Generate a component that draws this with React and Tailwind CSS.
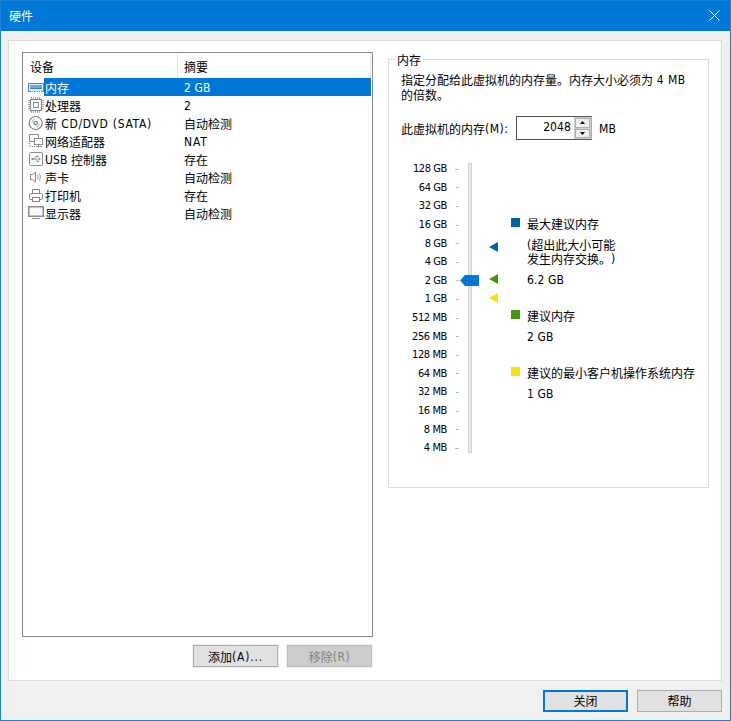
const MemoryIcon = () => (
  <svg width="16" height="16" viewBox="0 0 16 16" shapeRendering="crispEdges">
    <rect x="0" y="4" width="16" height="9" fill="#4d8cc0" />
    <rect x="1" y="5" width="14" height="7" fill="#d5ebfa" />
    <path d="M2 6h4v3H2zM6 6h4v3H6zM10 6h4v3h-4z" fill="#6aa9da" />
    <path d="M2 9h12v1H2z" fill="#3e86c4" />
    <path d="M3 12h1v1H3zM5 12h1v1H5zM8 12h1v1H8zM10 12h1v1h-1zM12 12h1v1h-1z" fill="#fff" />
  </svg>
);

const CpuIcon = () => (
  <svg width="16" height="16" viewBox="0 0 16 16" fill="none" stroke="#8c8c8c">
    <rect x="2.500" y="2.500" width="11" height="11" strokeWidth="1.200" />
    <rect x="5.500" y="5.500" width="5" height="5" />
    <path d="M3.500 0v2M5.500 0v2M7.500 0v2M9.500 0v2M11.500 0v2M3.500 14v2M5.500 14v2M7.500 14v2M9.500 14v2M11.500 14v2M0 3.500h2M0 5.500h2M0 7.500h2M0 9.500h2M0 11.500h2M14 3.500h2M14 5.500h2M14 7.500h2M14 9.500h2M14 11.500h2" stroke="#a5a5a5" />
  </svg>
);

const DiscIcon = () => (
  <svg width="16" height="16" viewBox="0 0 16 16" fill="none" stroke="#858585">
    <circle cx="7.700" cy="8" r="6.500" strokeWidth="1.200" />
    <circle cx="7.700" cy="8" r="1.700" strokeWidth="1.300" />
    <path d="M4 7.200a3.800 3.800 0 0 1 3-3M11.500 8.800a3.800 3.800 0 0 1-3 3" stroke="#b0b0b0" />
  </svg>
);

const NetworkIcon = () => (
  <svg width="16" height="16" viewBox="0 0 16 16" fill="none" stroke="#8c8c8c">
    <path d="M6 8.500H1.500v-7h9V5" />
    <path d="M1.500 10v4M2 13.500h5" strokeDasharray="1 1" />
    <rect x="6.500" y="5.500" width="8" height="6" fill="#fff" />
    <path d="M10.500 12v2M8 13.500h6" />
  </svg>
);

const UsbIcon = () => (
  <svg width="16" height="16" viewBox="0 0 16 16" fill="none" stroke="#8c8c8c">
    <rect x="1.500" y="1.500" width="13" height="13" rx="1" />
    <path d="M4 8h8M6 8l1.500-2.500H9M7.500 8l1.500 2.500h1" strokeWidth=".8" />
    <circle cx="4.500" cy="8" r="1.200" fill="#8c8c8c" stroke="none" />
    <path d="M9 4.700h1.600v1.600H9zM9.500 9.700h1.600v1.600H9.500zM11 6.500L13 8l-2 1.500z" fill="#8c8c8c" stroke="none" />
  </svg>
);

const SoundIcon = () => (
  <svg width="16" height="16" viewBox="0 0 16 16" fill="none" stroke="#858585">
    <path d="M2.500 5.500h2l3-2.500v10l-3-2.500h-2z" />
    <path d="M9.500 6q1.300 2 0 4M11.500 4.500q2 3.500 0 7" stroke="#9a9a9a" />
  </svg>
);

const PrinterIcon = () => (
  <svg width="16" height="16" viewBox="0 0 16 16" fill="none" stroke="#858585">
    <path d="M4.500 6V2.500h7V6" />
    <path d="M4 12.500H2.500a1 1 0 0 1-1-1V7.500a1 1 0 0 1 1-1h11a1 1 0 0 1 1 1v4a1 1 0 0 1-1 1H12" />
    <rect x="4.500" y="10.500" width="7" height="4" fill="#fff" />
  </svg>
);

const DisplayIcon = () => (
  <svg width="16" height="16" viewBox="0 0 16 16" fill="none" stroke="#8c8c8c">
    <rect x="0.750" y="1.750" width="14.500" height="9.500" fill="#fafafa" strokeWidth="1.500" />
    <path d="M4 13.500h8" />
  </svg>
);

const devices = [
  { icon: MemoryIcon, name: "内存", summary: "2 GB", selected: true },
  { icon: CpuIcon, name: "处理器", summary: "2" },
  { icon: DiscIcon, name: "新 CD/DVD (SATA)", summary: "自动检测", wide: true },
  { icon: NetworkIcon, name: "网络适配器", summary: "NAT", wide: true },
  { icon: UsbIcon, name: "USB 控制器", summary: "存在" },
  { icon: SoundIcon, name: "声卡", summary: "自动检测" },
  { icon: PrinterIcon, name: "打印机", summary: "存在" },
  { icon: DisplayIcon, name: "显示器", summary: "自动检测" },
];

const sizes = [
  "128 GB", "64 GB", "32 GB", "16 GB", "8 GB", "4 GB", "2 GB", "1 GB",
  "512 MB", "256 MB", "128 MB", "64 MB", "32 MB", "16 MB", "8 MB", "4 MB",
];

// CJK glyphs keep their 12px advance, latin runs get their own face
const Label = ({ text, tracking = "tracking-[0.1px]" }) =>
  text.split(/([\x20-\x7e]+)/).map((part, i) =>
    i % 2 ? (
      <span key={i} className={`align-[1px] font-['DejaVu_Sans_Condensed','DejaVu_Sans',sans-serif] leading-none [font-stretch:condensed] whitespace-pre ${tracking}`}>
        {part}
      </span>
    ) : (
      part
    )
  );

const Arrow = ({ color }) => (
  <svg width="9" height="10" viewBox="0 0 9 10">
    <path d="M0 5L9 0v10z" fill={color} />
  </svg>
);

const DeviceList = () => (
  <div className="h-[585px] w-[351px] border border-[#828790] bg-white">
    <div className="flex h-[25px] pt-px leading-[25px]">
      <div className="w-[155px] border-r border-[#e5e5e5] pl-[7px]">设备</div>
      <div className="w-[193px] border-r border-[#e5e5e5] pl-[6px]">摘要</div>
    </div>
    {devices.map(({ icon: Icon, name, summary, selected, wide }) => (
      <div key={name} className="flex h-[18px] pl-[5px] leading-[19px]">
        <div className="mt-px"><Icon /></div>
        <div className={`flex w-[327px] whitespace-nowrap pl-px ${selected ? "bg-[#0078d7] text-white" : ""}`}>
          <div className="w-[139px]"><Label text={name} tracking={wide ? "tracking-[0.7px]" : undefined} /></div>
          <div><Label text={summary} tracking={wide ? "tracking-[0.9px]" : undefined} /></div>
        </div>
      </div>
    ))}
  </div>
);

const Button = ({ className, children }) => (
  <button className={`h-[22px] w-[85px] ${className}`}>{children}</button>
);

const Spinner = () => (
  <div className="flex h-6 w-[76px] justify-end border border-[#555] border-r-[#ababab] bg-white">
    <div className="pr-[3px] leading-[20px]"><Label text="2048" /></div>
    <div className="flex w-[17px] flex-col gap-px bg-[#d0d0d0] p-px">
      <div className="flex flex-1 items-center justify-center border border-[#adadad] bg-[#f0f0f0]">
        <svg width="5" height="3"><path d="M0 3L2.500 0 5 3z" /></svg>
      </div>
      <div className="flex flex-1 items-center justify-center border border-[#adadad] bg-[#f0f0f0]">
        <svg width="5" height="3"><path d="M0 0L2.500 3 5 0z" /></svg>
      </div>
    </div>
  </div>
);

const MemoryScale = () => (
  <div className="flex text-[11px]">
    <div className="w-[71px]">
      {sizes.map((size, i) => (
        <div key={size} className="flex h-[18.6px] items-center justify-end">
          <span className="mr-2 font-['DejaVu_Sans_Condensed','DejaVu_Sans',sans-serif] [font-stretch:condensed] tracking-[-0.4px] leading-[18px]">{size}</span>
          <span className={`h-px bg-[#bdbdbd] ${i === 0 || i === 15 ? "w-1" : "ml-px w-[3px]"}`} />
        </div>
      ))}
    </div>
    <div className="relative mt-[3px] ml-[9px] h-[290px] w-1 border border-[#d1d3d3] bg-[#e7eaea]">
      <svg className="absolute top-[111px] left-[-9px]" width="19" height="11" viewBox="0 0 19 11">
        <path d="M0 5.500L5 0h14v11H5z" fill="#0078d7" />
      </svg>
    </div>
    <div className="ml-[17px] flex flex-col pt-[82px]">
      <Arrow color="#0064a8" />
      <div className="mt-[22px]"><Arrow color="#449810" /></div>
      <div className="mt-[9px]"><Arrow color="#ffdc0c" /></div>
    </div>
  </div>
);

const LegendItem = ({ swatch, title, value, children }) => (
  <div className="flex gap-[7px] whitespace-nowrap">
    <div className={`mt-[2px] size-[9px] shrink-0 ${swatch}`} />
    <div>
      <div className="leading-[16px]">{title}</div>
      {children}
      <div className="mt-[5px] leading-[16px]"><Label text={value} /></div>
    </div>
  </div>
);

const MemoryPanel = () => (
  <fieldset className="ml-[15px] h-[436px] w-[321px] border border-[#dcdcdc]">
    <legend className="ml-[6px] h-[14px] px-[2px] leading-[16px]">内存</legend>
    <div className="pt-[7px] pl-3">
      <div className="w-[290px] leading-[14px]">
        <div className="h-[15px]">
          <Label text="指定分配给此虚拟机的内存量。内存大小必须为 4 MB" tracking="tracking-[0.4px]" />
        </div>
        的倍数。
      </div>
      <div className="mt-[14px] flex">
        <div className="w-[115px] whitespace-nowrap leading-[26px]"><Label text="此虚拟机的内存(M):" tracking="tracking-[0.5px]" /></div>
        <Spinner />
        <div className="ml-[7px] leading-[26px]"><Label text="MB" /></div>
      </div>
      <div className="mt-[18px] flex">
        <div className="-ml-[13px]"><MemoryScale /></div>
        <div className="ml-[13px] pt-[56px]">
          <LegendItem swatch="bg-[#0064a8]" title="最大建议内存" value="6.2 GB">
            <div className="mt-[6px] pb-px leading-[14px] [text-spacing-trim:space-all]">
              <Label text="(" />超出此大小可能<br />发生内存交换。<Label text=")" />
            </div>
          </LegendItem>
          <div className="h-5" />
          <LegendItem swatch="bg-[#449810]" title="建议内存" value="2 GB" />
          <div className="h-5" />
          <LegendItem swatch="bg-[#ffdc0c]" title="建议的最小客户机操作系统内存" value="1 GB" />
        </div>
      </div>
    </div>
  </fieldset>
);

export default function App() {
  return (
    <div className="flex h-[721px] w-[731px] flex-col border border-[#1883d7] bg-[#f0f0f0] font-['Noto_Sans_CJK_SC',sans-serif] text-[12px] text-black">
      <div className="flex h-[30px] items-center justify-between bg-[#0078d7] pr-[10px] pl-2 leading-[28px] text-white">
        <span className="-mt-px">硬件</span>
        <svg className="-mt-[2px]" width="11" height="11" viewBox="0 0 11 11" stroke="#fff"><path d="M.5.5l10 10M10.500.5l-10 10" /></svg>
      </div>
      <div className="mt-[9px] ml-[7px] flex h-[641px] w-[714px] border border-[#dcdcdc] bg-white pt-[11px] pl-[13px]">
        <div>
          <DeviceList />
          <div className="mt-2 flex justify-end gap-[9px] pr-px">
            <Button className="border border-[#adadad] bg-[#e1e1e1] leading-[22px] ring-1 ring-[#f0f0f0]"><Label text="添加(A)..." tracking="tracking-[0.8px]" /></Button>
            <Button className="border border-[#bfbfbf] bg-[#ccc] leading-[22px] text-[#838383] ring-1 ring-[#f0f0f0]"><Label text="移除(R)" tracking="tracking-[0.5px]" /></Button>
          </div>
        </div>
        <MemoryPanel />
      </div>
      <div className="mt-[9px] flex justify-end gap-[9px] pr-2">
        <Button className="border-2 border-[#0078d7] bg-[#e1e1e1] leading-[18px]">关闭</Button>
        <Button className="border border-[#adadad] bg-[#e1e1e1] leading-[20px]">帮助</Button>
      </div>
    </div>
  );
}
